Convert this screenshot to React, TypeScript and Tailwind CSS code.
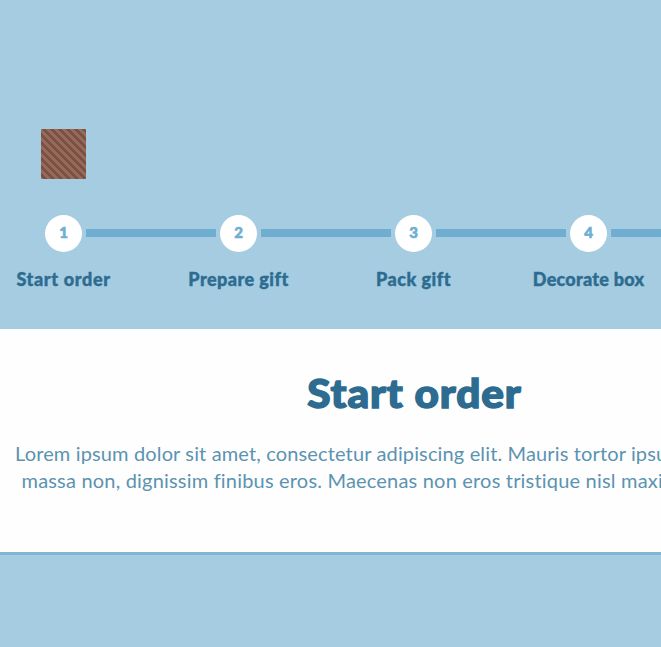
const steps = [
  { label: 'Start order', fit: 'tracking-[0.65px]' },
  { label: 'Prepare gift', fit: 'tracking-[0.45px]' },
  { label: 'Pack gift', fit: 'tracking-[0.5px]' },
  { label: 'Decorate box', fit: 'tracking-[0.25px]' },
];

function Step({ index, label, fit }: { index: number; label: string; fit: string }) {
  return (
    <li className="flex w-[175px] shrink-0 flex-col items-center">
      <div className="flex w-full items-center justify-between">
        <span className={`h-2 w-[65px] ${index === 0 ? '' : 'bg-[#6faed1]'}`} />
        <span className="flex size-[37px] items-center justify-center rounded-full bg-white pb-px text-[15px] font-black text-[#6faed1] [-webkit-text-stroke:0.6px_#6faed1]">
          {index + 1}
        </span>
        <span className="h-2 w-[65px] bg-[#6faed1]" />
      </div>
      <span className={`mt-[14px] whitespace-nowrap text-[18px] leading-[27px] font-black text-[#2d6c90] [-webkit-text-stroke:0.4px_#2d6c90] ${fit}`}>
        {label}
      </span>
    </li>
  );
}

export default function App() {
  return (
    <main className="h-[647px] w-full overflow-hidden bg-[#a6cce1] pt-[129px] font-['Lato',sans-serif]">
      <div className="ml-[41px] h-[50px] w-[45px] rounded-[1px] bg-[linear-gradient(45deg,#7a5142_25%,#966b5b_25%,#966b5b_50%,#7a5142_50%,#7a5142_75%,#966b5b_75%)] bg-size-[8px_8px]" />
      <ol className="mt-[35.5px] -ml-[24px] flex h-[114.5px] w-[875px]">
        {steps.map((step, i) => (
          <Step key={step.label} index={i} label={step.label} fit={step.fit} />
        ))}
      </ol>
      <section className="h-[226px] w-[827px] border-b-[3px] border-[#7fb6d5] bg-[#fefefe] pt-[39px]">
        <h1 className="translate-x-px scale-x-[1.085] text-center text-[39px] leading-[50px] font-black tracking-[0.8px] text-[#2d6c90] [-webkit-text-stroke:1.4px_#2d6c90]">
          Start order
        </h1>
        <div className="mt-[22px] whitespace-nowrap text-[20px] leading-[27px] text-[#5b93b1]">
          <p className="pl-[15px] tracking-[0.14px]">Lorem ipsum dolor sit amet, consectetur adipiscing elit. Mauris tortor ipsu</p>
          <p className="pl-[21.5px] tracking-[0.19px]">massa non, dignissim finibus eros. Maecenas non eros tristique nisl maxi</p>
        </div>
      </section>
    </main>
  );
}
